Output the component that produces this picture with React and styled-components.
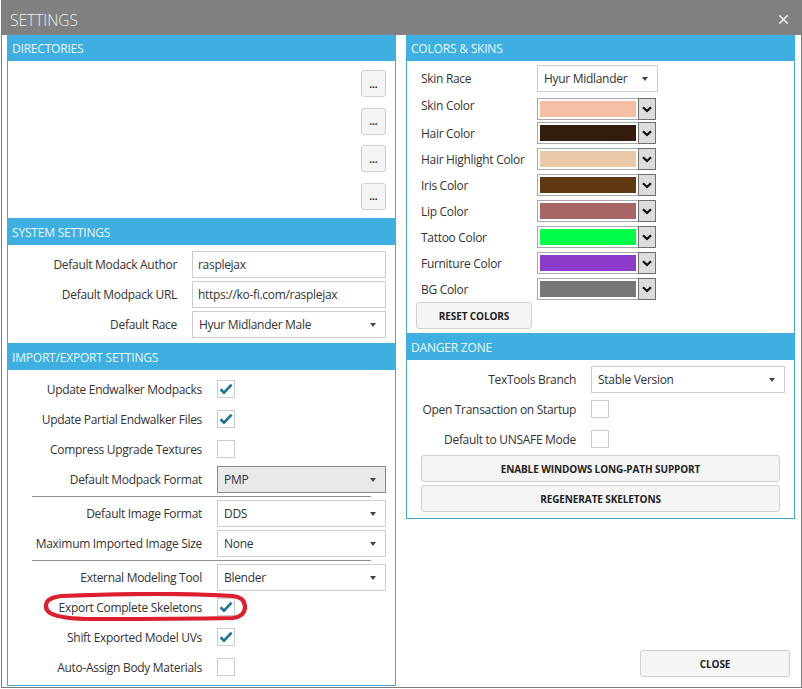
import React from 'react';
import styled, { createGlobalStyle } from 'styled-components';
import { X } from 'lucide-react';

const GlobalStyle = createGlobalStyle`
  html, body {
    margin: 0;
    padding: 0;
    background: #fff;
  }
  * {
    box-sizing: border-box;
  }
`;

const colors = [
  { name: 'Skin Color', value: '#f5bfa5' },
  { name: 'Hair Color', value: '#331c0e' },
  { name: 'Hair Highlight Color', value: '#e9c8a6' },
  { name: 'Iris Color', value: '#5e3812' },
  { name: 'Lip Color', value: '#aa6666' },
  { name: 'Tattoo Color', value: '#00ff48' },
  { name: 'Furniture Color', value: '#8a3bc9' },
  { name: 'BG Color', value: '#777777' },
];

const Caret = () => (
  <svg width="6" height="4" viewBox="0 0 6 4">
    <path d="M0 0h6L3 4z" fill="#444" />
  </svg>
);

const Select = ({ value, active }) => (
  <SelectBox $active={active}>
    <span>{value}</span>
    <Caret />
  </SelectBox>
);

const Check = ({ on }) => (
  <CheckBox>
    {on && (
      <svg width="14" height="12" viewBox="0 0 14 12">
        <path d="M1.5 6.2 5 9.6 12.6 1.6" fill="none" stroke="#1f7299" strokeWidth="2.6" />
      </svg>
    )}
  </CheckBox>
);

const ColorPicker = ({ value }) => (
  <PickerRow>
    <Swatch>
      <SwatchFill style={{ background: value }} />
    </Swatch>
    <PickerArrow>
      <svg width="10" height="7" viewBox="0 0 10 7">
        <path d="M1 1.2 5 5 9 1.2" fill="none" stroke="#111" strokeWidth="2.2" />
      </svg>
    </PickerArrow>
  </PickerRow>
);

const App = () => {
  return (
    <Page>
      <GlobalStyle />
      <Window>
        <TitleBar>
          <Title>SETTINGS</Title>
          <X size={15} color="#ececec" strokeWidth={2.6} />
        </TitleBar>
        <Columns>
          <Panel>
            <Header>DIRECTORIES</Header>
            <Directories>
              <DotsButton>...</DotsButton>
              <DotsButton>...</DotsButton>
              <DotsButton>...</DotsButton>
              <DotsButton>...</DotsButton>
            </Directories>

            <Header>SYSTEM SETTINGS</Header>
            <FormBody>
              <Row>
                <Label>Default Modack Author</Label>
                <TextInput>rasplejax</TextInput>
              </Row>
              <Row>
                <Label>Default Modpack URL</Label>
                <TextInput>https://ko-fi.com/rasplejax</TextInput>
              </Row>
              <Row>
                <Label>Default Race</Label>
                <Select value="Hyur Midlander Male" />
              </Row>
            </FormBody>

            <Header>IMPORT/EXPORT SETTINGS</Header>
            <ImportBody>
              <CheckRow $wide>
                <Label>Update Endwalker Modpacks</Label>
                <Check on />
              </CheckRow>
              <CheckRow $wide>
                <Label>Update Partial Endwalker Files</Label>
                <Check on />
              </CheckRow>
              <CheckRow $wide $after={8}>
                <Label>Compress Upgrade Textures</Label>
                <Check />
              </CheckRow>
              <Row $wide>
                <Label>Default Modpack Format</Label>
                <Select value="PMP" active />
              </Row>
              <Divider />
              <Row $wide>
                <Label>Default Image Format</Label>
                <Select value="DDS" />
              </Row>
              <Row $wide>
                <Label>Maximum Imported Image Size</Label>
                <Select value="None" />
              </Row>
              <Divider />
              <Row $wide $after={7}>
                <Label>External Modeling Tool</Label>
                <Select value="Blender" />
              </Row>
              <CheckRow $wide>
                <Label>Export Complete Skeletons</Label>
                <Check on />
                <Scribble viewBox="0 0 204 30" preserveAspectRatio="none">
                  <path
                    d="M18 4C70 2 140 1 190 4C198 5 202 9 202 15C202 21 198 25 190 26C140 27 90 27 50 27C30 27 14 25 7 21C3 18 2 14 4 10C6 6 12 5 18 4Z"
                    fill="none"
                    stroke="#dc1f2e"
                    strokeWidth="4.2"
                  />
                </Scribble>
              </CheckRow>
              <CheckRow $wide>
                <Label>Shift Exported Model UVs</Label>
                <Check on />
              </CheckRow>
              <CheckRow $wide $after={0}>
                <Label>Auto-Assign Body Materials</Label>
                <Check />
              </CheckRow>
            </ImportBody>
          </Panel>

          <RightColumn>
            <Panel>
              <Header>COLORS &amp; SKINS</Header>
              <ColorsBody>
                <ColorRow $after={6}>
                  <ColorLabel>Skin Race</ColorLabel>
                  <SkinSelect>
                    <Select value="Hyur Midlander" />
                  </SkinSelect>
                </ColorRow>
                {colors.map((color, i) => (
                  <ColorRow key={color.name} $after={i === 0 ? 2 : 4}>
                    <ColorLabel $raised={i === 0}>{color.name}</ColorLabel>
                    <ColorPicker value={color.value} />
                  </ColorRow>
                ))}
                <ResetButton>RESET COLORS</ResetButton>
              </ColorsBody>

              <Header>DANGER ZONE</Header>
              <DangerBody>
                <Row $after={7}>
                  <Label>TexTools Branch</Label>
                  <Select value="Stable Version" />
                </Row>
                <CheckRow>
                  <Label>Open Transaction on Startup</Label>
                  <Check />
                </CheckRow>
                <CheckRow $after={7}>
                  <Label>Default to UNSAFE Mode</Label>
                  <Check />
                </CheckRow>
                <WideButton $after={3}>ENABLE WINDOWS LONG-PATH SUPPORT</WideButton>
                <WideButton>REGENERATE SKELETONS</WideButton>
              </DangerBody>
            </Panel>
            <CloseButton>CLOSE</CloseButton>
          </RightColumn>
        </Columns>
      </Window>
    </Page>
  );
};

const Page = styled.div`
  width: 802px;
  height: 689px;
  overflow: hidden;
  padding-left: 1px;
  background: #fff;
  font-family: "Open Sans", "Noto Sans", sans-serif;
  font-size: 12px;
  letter-spacing: -0.3px;
  color: #333;
`;

const Window = styled.div`
  width: 801px;
  height: 688px;
  background: #fff;
  border-left: 1px solid #7d7d7d;
  border-right: 1px solid #7d7d7d;
  border-bottom: 1px solid #7d7d7d;
`;

const TitleBar = styled.div`
  height: 35px;
  margin-left: -1px;
  margin-right: -1px;
  padding: 4px 11px 0 9px;
  display: flex;
  align-items: center;
  justify-content: space-between;
  background: #808080;
`;

const Title = styled.h1`
  margin: 0;
  font-size: 15.5px;
  font-weight: 300;
  letter-spacing: 0;
  color: #eeeeee;
`;

const Columns = styled.div`
  display: grid;
  grid-template-columns: 389px 389px;
  grid-template-rows: minmax(0, 1fr);
  gap: 10px;
  padding-left: 5px;
  height: 651px;
`;

const Panel = styled.section`
  display: flex;
  flex-direction: column;
  border: 1px solid #4aa3cf;
  border-top: 0;
`;

const RightColumn = styled.div`
  display: flex;
  flex-direction: column;
  justify-content: space-between;
  padding-bottom: 9px;
`;

const Header = styled.h2`
  height: 27px;
  margin: 0 -1px;
  padding: 1px 0 0 5px;
  display: flex;
  align-items: center;
  flex-shrink: 0;
  font-size: 12px;
  font-weight: 400;
  letter-spacing: -0.2px;
  color: #eaf7fd;
  background: #3fafe2;
  &:first-child {
    height: 26px;
    padding-top: 0;
  }
`;

const Directories = styled.div`
  height: 157px;
  padding: 9px 9px 0 0;
  display: flex;
  flex-direction: column;
  align-items: flex-end;
  gap: 10.5px;
`;

const BaseButton = styled.button`
  padding: 0;
  border: 1px solid #cfcfcf;
  border-radius: 3px;
  background: #f5f5f5;
  font-family: inherit;
  font-size: 10px;
  font-weight: 700;
  letter-spacing: -0.1px;
  color: #222;
`;

const DotsButton = styled(BaseButton)`
  width: 25px;
  height: 27px;
`;

const FormBody = styled.div`
  padding: 6px 0 2px;
  display: flex;
  flex-direction: column;
`;

const ImportBody = styled.div`
  padding-top: 10px;
  display: flex;
  flex-direction: column;
`;

const Row = styled.div`
  position: relative;
  display: grid;
  grid-template-columns: ${(p) => (p.$wide ? '194px 169px' : '169px 194px')};
  column-gap: 15px;
  align-items: center;
  height: 27px;
  margin-bottom: ${(p) => p.$after ?? 3}px;
`;

const CheckRow = styled(Row)`
  height: 18px;
  margin-bottom: ${(p) => p.$after ?? 12}px;
`;

const Label = styled.label`
  text-align: right;
  white-space: nowrap;
`;

const TextInput = styled.div`
  height: 27px;
  padding-left: 5px;
  display: flex;
  align-items: center;
  border: 1px solid #cccccc;
  background: #fff;
`;

const SelectBox = styled.div`
  height: 27px;
  padding: 0 9px 0 6px;
  display: flex;
  align-items: center;
  justify-content: space-between;
  border: 1px solid ${(p) => (p.$active ? '#8a8a8a' : '#cccccc')};
  background: ${(p) => (p.$active ? '#e9e9e9' : '#fff')};
`;

const CheckBox = styled.div`
  width: 18px;
  height: 18px;
  display: flex;
  align-items: center;
  justify-content: center;
  border: 1px solid #cccccc;
  background: #fff;
`;

const Divider = styled.hr`
  width: 339px;
  height: 1px;
  margin: 0 0 3px 24px;
  border: 0;
  background: #8f8f8f;
`;

const Scribble = styled.svg`
  position: absolute;
  left: 35px;
  top: -6px;
  width: 204px;
  height: 30px;
  pointer-events: none;
`;

const ColorsBody = styled.div`
  height: 272px;
  padding: 4px 0 0 14px;
  display: flex;
  flex-direction: column;
`;

const ColorRow = styled.div`
  display: grid;
  grid-template-columns: 116px auto;
  justify-content: start;
  align-items: center;
  margin-bottom: ${(p) => p.$after}px;
`;

const ColorLabel = styled.label`
  white-space: nowrap;
  position: relative;
  top: ${(p) => (p.$raised ? '-4px' : '0')};
`;

const SkinSelect = styled.div`
  width: 121px;
`;

const PickerRow = styled.div`
  display: flex;
  width: 119px;
  height: 22px;
`;

const Swatch = styled.div`
  width: 102px;
  padding: 2px;
  border: 1px solid #a9a9a9;
  background: #fff;
`;

const SwatchFill = styled.div`
  height: 100%;
`;

const PickerArrow = styled.div`
  width: 18px;
  margin-left: -1px;
  display: flex;
  align-items: center;
  justify-content: center;
  border: 1px solid #707070;
  background: #dcdcdc;
`;

const ResetButton = styled(BaseButton)`
  width: 116px;
  height: 27px;
  margin: -2px 0 0 -5px;
`;

const DangerBody = styled.div`
  padding-top: 6px;
  height: 158px;
  display: flex;
  flex-direction: column;
  > button {
    margin-left: 14px;
  }
`;

const WideButton = styled(BaseButton)`
  width: 359px;
  height: 27px;
  margin-bottom: ${(p) => p.$after ?? 0}px;
`;

const CloseButton = styled(BaseButton)`
  align-self: flex-end;
  width: 150px;
  height: 27px;
  margin-right: 5px;
`;

export default App;
